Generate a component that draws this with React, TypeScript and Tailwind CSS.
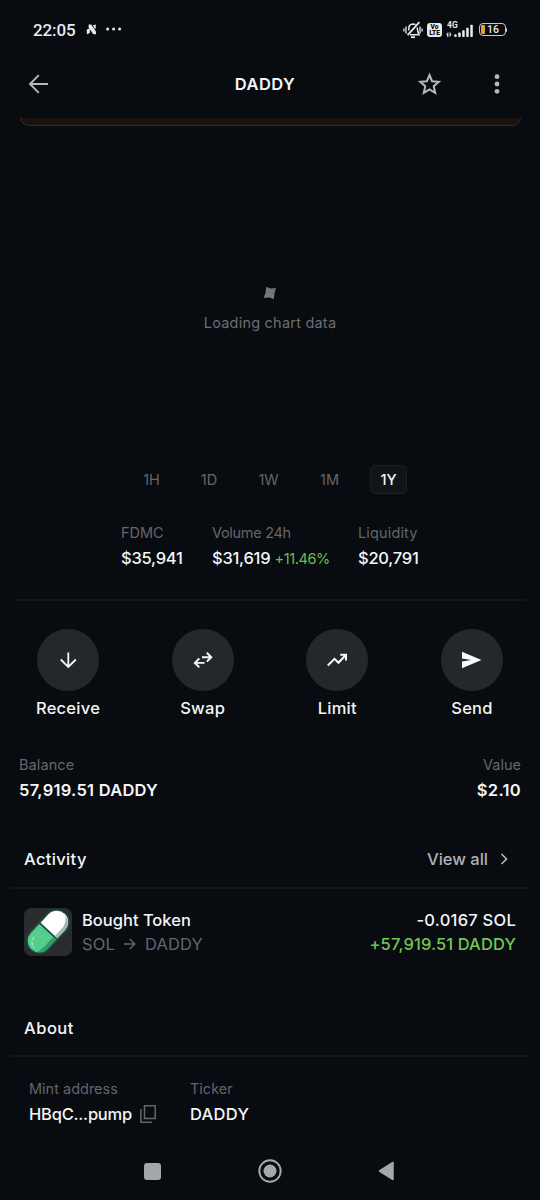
import { useState } from 'react';
import type { ReactNode } from 'react';

const ranges = [
  { label: '1H', width: 'w-[37px]' },
  { label: '1D', width: 'w-[38px]' },
  { label: '1W', width: 'w-[41px]' },
  { label: '1M', width: 'w-[41px]' },
  { label: '1Y', width: 'w-[37px]' },
];

function StatusBar() {
  return (
    <div className="flex h-[60px] items-center justify-between pl-[33px] pr-[33px] text-[#e9eaec]">
      <div className="flex items-center">
        <span className="w-[53px] whitespace-nowrap font-[Roboto] text-[17px] font-medium leading-5 tracking-[-0.1px]">22:05</span>
        <svg width="11" height="11" viewBox="0 0 11 11" fill="currentColor" className="mt-[-1px]">
          <path d="M2.6 0.6h2.6l4.800 7v2.600H7.300L2.600 3.600z" />
          <path d="M.8 5.400 3.800 4.200v4.700L.9 10.300z" />
          <path d="M7 1.200 9.800.4 9.700 4.500 8.800 5z" />
        </svg>
        <svg width="17" height="4" viewBox="0 0 17 4" fill="currentColor" className="ml-[8px] mt-[-2px]">
          <circle cx="2.600" cy="2" r="1.500" />
          <circle cx="8.600" cy="2" r="1.500" />
          <circle cx="14.600" cy="2" r="1.500" />
        </svg>
      </div>
      <div className="mt-[-1px] flex items-center">
        <svg width="20" height="18" viewBox="0 0 20 18" fill="none" stroke="currentColor" strokeWidth="1.500">
          <path d="M4.600 14.200 16.400 1.200" strokeWidth="1.800" />
          <path d="M5.800 9.500V7.500C5.800 5 7.500 3 10 2.900c1 0 1.800.2 2.500.7M14.200 6.500c.2 3.500.3 4.600 1.800 7.200H7" />
          <path d="M8 16.200h4" strokeWidth="1.800" />
          <path d="M3 5.500v7M.9 7.500v3M17 5.500v7M19.100 7.500v3" strokeWidth="1.300" />
        </svg>
        <div className="ml-[4px] flex h-[14px] w-[15px] flex-col items-center justify-center rounded-[3px] bg-[#e9eaec] font-[Roboto] text-[6.5px] font-black leading-[6px] text-[#080b10]">
          <span>Vo</span>
          <span>LTE</span>
        </div>
        <div className="ml-[4px] flex h-[18px] w-[28px] flex-col">
          <span className="h-[8px] pl-[1px] font-[Roboto] text-[8.5px] font-bold leading-[8px]">4G</span>
          <svg width="28" height="14" viewBox="0 0 28 14" fill="currentColor" className="mt-[-5px] shrink-0">
            <path d="M1.800 8.500 0 10.800h1.200V13h1.200V8.500zM3.600 13l2.200-2.500H4.700V8.500H3.600z" />
            <rect x="8.200" y="10.200" width="2.500" height="2.800" rx=".8" />
            <rect x="12.200" y="8.500" width="2.500" height="4.500" rx=".8" />
            <rect x="16.200" y="6.300" width="2.500" height="6.700" rx=".8" />
            <rect x="20.200" y="3.800" width="2.500" height="9.200" rx=".8" />
            <rect x="24.300" y="0.800" width="2.500" height="12.200" rx=".8" />
          </svg>
        </div>
        <div className="ml-[5px] flex items-center">
          <div className="flex h-[13px] w-[27px] items-center rounded-[4px] border-[1.5px] border-[#c8c9cb] pl-[1px]">
            <div className="h-[9px] w-[4px] rounded-[1px] bg-[#e0a038]" />
            <span className="ml-[2px] font-[Roboto] text-[10.5px] font-medium leading-[10px]">16</span>
          </div>
          <div className="h-[4px] w-[1px] rounded-r bg-[#c8c9cb]" />
        </div>
      </div>
    </div>
  );
}

function Header() {
  return (
    <header className="grid h-[48px] grid-cols-3 items-center pl-[28px] pr-[40px]">
      <svg width="21" height="20" viewBox="0 0 21 20" fill="none" stroke="#b4b8bf" strokeWidth="1.900">
        <path d="M20 10H2.500M10.800 1.200 2 10l8.800 8.800" />
      </svg>
      <h1 className="ml-[-16px] pl-[18px] text-center text-[16.5px] font-semibold tracking-[0.5px] text-[#f4f5f7]">DADDY</h1>
      <div className="flex items-center justify-end">
        <svg width="24" height="24" viewBox="0 0 24 24" fill="none" stroke="#b4b8bf" strokeWidth="2" className="mr-[52px]">
          <path d="m11.500 3 2.600 6.200 6.700.6-5.100 4.400 1.500 6.600L11.500 17.300l-5.700 3.500 1.500-6.600-5.100-4.400 6.700-.6z" />
        </svg>
        <svg width="6" height="22" viewBox="0 0 6 22" fill="#b4b8bf">
          <circle cx="3" cy="3.700" r="2.400" />
          <circle cx="3" cy="11" r="2.400" />
          <circle cx="3" cy="18.300" r="2.400" />
        </svg>
      </div>
    </header>
  );
}

function Stat({ label, className, children }: { label: string; className: string; children: ReactNode }) {
  return (
    <div className={className}>
      <p className="text-[14.5px] leading-6 text-[#63666c]">{label}</p>
      <p className="mt-[1px] whitespace-nowrap text-[16.5px] font-medium leading-6 tracking-[-0.25px] text-[#f4f5f7]">{children}</p>
    </div>
  );
}

function Action({ label, children }: { label: string; children: ReactNode }) {
  return (
    <button className="flex w-[64px] flex-col items-center">
      <span className="flex h-[62px] w-[62px] items-center justify-center rounded-full bg-[#24272c] text-[#f8f9fb]">{children}</span>
      <span className="mt-[5px] text-[16.5px] font-medium leading-6 tracking-[0.25px] text-[#f4f5f7]">{label}</span>
    </button>
  );
}

function PillIcon() {
  return (
    <svg width="48" height="48" viewBox="0 0 48 48">
      <rect width="48" height="48" rx="7" fill="#292b2f" />
      <g transform="translate(24 23.500) rotate(-47) scale(.95) translate(-24 -23.500)">
        <rect x="-3" y="9.500" width="54" height="28" rx="14" fill="#1d4f41" />
        <path d="M23.500 11.500H10.500a12 12 0 0 0 0 24h13z" fill="#54ce8c" />
        <path d="M0 29.500A12 12 0 0 0 10.500 35.500h13v-4H11c-4 0-8-.5-11-2z" fill="#329b6b" />
        <path d="M25.500 11.500H37.500a12 12 0 0 1 0 24H25.500z" fill="#fff" />
        <path d="M25.500 32H36c6 0 10-3 12.500-7C48 31 43.500 35.500 37.500 35.500H25.500z" fill="#a3b7b8" />
      </g>
      <path d="M10 29 8 32v4.500l1.800 3.500" fill="none" stroke="#c4f7da" strokeWidth="1" strokeDasharray="4 1.500" />
    </svg>
  );
}

function NavBar() {
  return (
    <nav className="flex h-[58px] items-center pl-[144px]">
      <div className="h-[17px] w-[17px] rounded-[3px] bg-[#a5a6a9]" />
      <svg width="24" height="24" viewBox="0 0 24 24" className="ml-[97px]">
        <circle cx="12" cy="12" r="10.700" fill="none" stroke="#a5a8aa" strokeWidth="1.900" />
        <circle cx="12" cy="12" r="6.500" fill="#a5a8aa" />
      </svg>
      <svg width="18" height="20" viewBox="0 0 18 20" className="ml-[95px]">
        <path d="M2.500 10 16 1.500v17z" fill="#a5a8aa" stroke="#a5a8aa" strokeWidth="1.500" strokeLinejoin="round" />
      </svg>
    </nav>
  );
}

export default function App() {
  const [range, setRange] = useState('1Y');

  return (
    <div className="flex h-[1200px] w-[540px] flex-col overflow-hidden bg-[#080b10] font-[Inter,sans-serif]">
      <StatusBar />
      <Header />

      {/* Bottom edge of the warning banner, scrolled under the header */}
      <div className="mx-[19.5px] mt-[10px] h-[9px] overflow-hidden">
        <div className="mt-[-20px] h-[28px] rounded-[9px] border border-[#3f2d12] bg-[#1a1211]" />
      </div>

      {/* Chart */}
      <div className="flex h-[338px] flex-col items-center pt-[159px]">
        <svg width="14" height="14" viewBox="0 0 14 14" fill="#72757a">
          <path d="M3.200.8 7.500 2.400 12.900 2 11.600 6.700 10.900 13.200 6.500 11.500.600 11.700 2.500 6.800z" />
        </svg>
        <p className="mt-[11px] text-[14.5px] leading-6 tracking-[0.22px] text-[#6b6e73]">Loading chart data</p>
      </div>

      <div className="flex h-[29px] justify-center gap-[20px]">
        {ranges.map(r => (
          <button
            key={r.label}
            onClick={() => setRange(r.label)}
            className={`${r.width} h-[29px] rounded-[5px] border text-[14.5px] ${
              range === r.label
                ? 'border-[#1c1f24] bg-[#111419] font-medium text-[#f4f5f7]'
                : 'border-transparent text-[#63666c]'
            }`}
          >
            {r.label}
          </button>
        ))}
      </div>

      <div className="mt-[27px] flex h-[78px] pl-[121px]">
        <Stat label="FDMC" className="w-[91px]">$35,941</Stat>
        <Stat label="Volume 24h" className="w-[146px] [&>p:first-child]:tracking-[-0.3px]">
          $31,619 <span className="text-[14.5px] font-normal tracking-[-0.4px] text-[#6cbf4f]">+11.46%</span>
        </Stat>
        <Stat label="Liquidity" className="w-[80px] [&>p:first-child]:tracking-[0.15px]">$20,791</Stat>
      </div>

      <div className="mx-[14px] h-[2px] shrink-0 bg-[#14171b]" />

      <div className="mt-[28px] flex h-[95px] justify-between px-[36px]">
        <Action label="Receive">
          <svg width="18" height="18" viewBox="0 0 18 18" fill="none" stroke="currentColor" strokeWidth="1.800">
            <path d="M9.300 1.500v14M1.800 8.500 9.300 16l7.500-7.500" />
          </svg>
        </Action>
        <Action label="Swap">
          <svg width="20" height="18" viewBox="0 0 20 18" fill="none" stroke="currentColor" strokeWidth="1.900">
            <path d="M9 6.200h9M13.800 1.800l4.500 4.400-4.500 4.400M11.500 11.900H2M6.300 7.500l-4.500 4.400 4.500 4.400" />
          </svg>
        </Action>
        <Action label="Limit">
          <svg width="22" height="16" viewBox="0 0 22 16" fill="none" stroke="currentColor" strokeWidth="2">
            <path d="M1.800 13.500 8.500 6.800l4 4L19.500 3.300M14.300 2.800h5.700v5.700" />
          </svg>
        </Action>
        <Action label="Send">
          <svg width="20" height="18" viewBox="0 0 20 18" fill="currentColor">
            <path d="M0 .8 19.500 9 0 17.200V10.600L9 9 0 7.400z" />
          </svg>
        </Action>
      </div>

      <div className="mt-[29px] flex h-[83px] justify-between px-[19px]">
        <div>
          <p className="text-[14.5px] leading-6 tracking-[0.1px] text-[#63666c]">Balance</p>
          <p className="mt-[1px] text-[16.5px] font-semibold leading-6 tracking-[0.25px] text-[#f4f5f7]">57,919.51 DADDY</p>
        </div>
        <div className="text-right">
          <p className="text-[14.5px] leading-6 text-[#63666c]">Value</p>
          <p className="mt-[1px] text-[16.5px] font-semibold leading-6 tracking-[0.3px] text-[#f4f5f7]">$2.10</p>
        </div>
      </div>

      {/* Activity */}
      <div className="mt-[11px] flex h-[40px] justify-between pl-[24px] pr-[32px] text-[16.5px] font-medium leading-6">
        <h2 className="tracking-[0.35px] text-[#f4f5f7]">Activity</h2>
        <button className="flex h-6 items-center text-[#b0b3b9]">
          View all
          <svg width="8" height="12" viewBox="0 0 8 12" fill="none" stroke="currentColor" strokeWidth="1.700" className="ml-[12px]">
            <path d="m1.500 1 5 5-5 5" />
          </svg>
        </button>
      </div>
      <div className="mx-[10px] h-[2px] shrink-0 bg-[#14171b]" />

      <div className="mt-[19px] flex h-[48px] pl-[24px] pr-[24px] text-[16.5px] font-medium leading-6">
        <PillIcon />
        <div className="ml-[10px] flex-1">
          <p className="text-[#f4f5f7]">Bought Token</p>
          <p className="flex items-center font-normal tracking-[0.15px] text-[#63666c]">
            SOL
            <svg width="12" height="12" viewBox="0 0 12 12" fill="none" stroke="currentColor" strokeWidth="1.400" className="mx-[9px]">
              <path d="M0 6h10.500M5.800 1l5 5-5 5" />
            </svg>
            DADDY
          </p>
        </div>
        <div className="text-right">
          <p className="tracking-[0.25px] text-[#f4f5f7]">-0.0167 SOL</p>
          <p className="tracking-[0.12px] text-[#74c654]">+57,919.51 DADDY</p>
        </div>
      </div>

      {/* About */}
      <h2 className="mt-[60px] h-[39px] pl-[24px] text-[16.5px] font-medium leading-6 tracking-[0.5px] text-[#f4f5f7]">About</h2>
      <div className="mx-[10px] h-[2px] shrink-0 bg-[#14171b]" />

      <div className="mt-[20px] flex h-[65px] pl-[29px]">
        <div className="w-[161px]">
          <p className="text-[14.5px] leading-6 text-[#63666c]">Mint address</p>
          <div className="mt-[1px] flex items-center">
            <span className="text-[16.5px] font-medium leading-6 tracking-[-0.22px] text-[#f4f5f7]">HBqC...pump</span>
            <svg width="16" height="18" viewBox="0 0 16 18" fill="none" stroke="#63666c" strokeWidth="1.500" className="ml-[8px]">
              <path d="M4.500.8h10.700v12.700H4.500zM.9 4v13.200h10.900" />
            </svg>
          </div>
        </div>
        <div>
          <p className="text-[14.5px] leading-6 text-[#63666c]">Ticker</p>
          <p className="mt-[1px] text-[16.5px] font-medium leading-6 tracking-[0.3px] text-[#f4f5f7]">DADDY</p>
        </div>
      </div>

      <NavBar />
    </div>
  );
}
